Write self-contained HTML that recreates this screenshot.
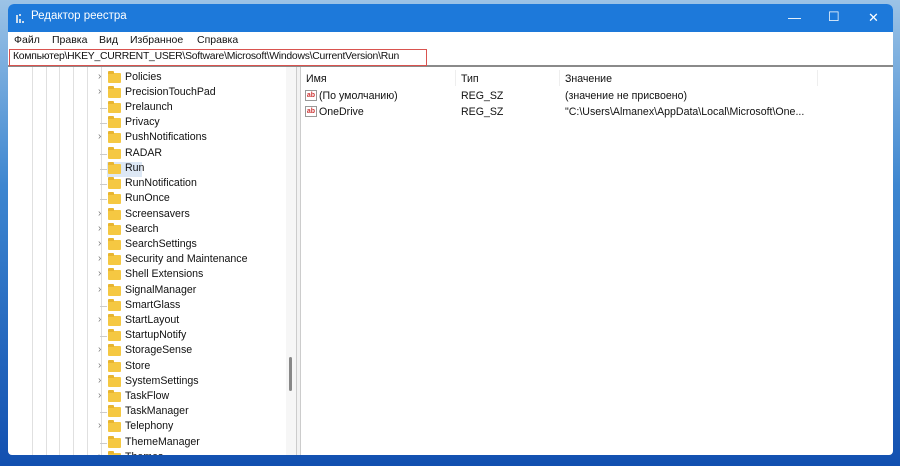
<!DOCTYPE html>
<html><head><meta charset="utf-8"><style>
*{margin:0;padding:0;box-sizing:border-box}
body{width:900px;height:466px;overflow:hidden;background:linear-gradient(180deg,#9cc3e6 0%,#3d86d0 40%,#1250b0 100%);font-family:"Segoe UI","Liberation Sans",sans-serif;position:relative}
.win{position:absolute;left:8px;top:4px;width:885px;height:451px;background:#fff;border-radius:6px 6px 4px 4px;overflow:hidden}
.title{height:28px;background:#1d79da;color:#fff;font-size:11.5px;position:relative}
.title .t{position:absolute;left:23px;top:6px}
.title .ic{position:absolute;left:8px;top:9px;width:10px;height:10px}
.ctl{position:absolute;top:6px;font-size:13px;color:#fff}
.menu{height:16px;font-size:10.5px;color:#111;padding-left:6px;position:relative}
.menu span{position:absolute;top:0}
.addr{position:absolute;left:1px;top:45px;width:418px;height:17px;border:1.5px solid #d9534f;font-size:10.4px;letter-spacing:-0.25px;line-height:14px;padding-left:3px;color:#111;white-space:nowrap;overflow:hidden}
.abar{position:absolute;left:0;top:44px;width:885px;height:19px;border-bottom:2px solid #8a8a8a}
.tree{position:absolute;left:0;top:63px;width:288px;height:388px;overflow:hidden}
.vl{position:absolute;top:0;bottom:0;width:1px;background:#e0e0e0}
.row{position:absolute;left:90px;height:15px;font-size:10.6px;color:#111;white-space:nowrap}
.row .ch{position:absolute;left:0;top:0;color:#777;font-size:10px}
.row .f{position:absolute;left:10px;top:2px;width:13px;height:10px;background:#f5c842;border-radius:1px}
.row .f:before{content:"";position:absolute;left:0;top:-2px;width:6px;height:3px;background:#e8b530;border-radius:1px 1px 0 0}
.row .n{position:absolute;left:27px;top:0}
.row .d{position:absolute;left:2px;top:7px;width:7px;height:1px;background:#ccc}
.sb{position:absolute;left:278px;top:0;width:10px;height:388px;background:#f6f6f6}
.thumb{position:absolute;left:3px;top:290px;width:3px;height:34px;background:#888;border-radius:2px}
.split{position:absolute;left:288px;top:63px;width:5px;height:388px;border-left:1px solid #ccc;border-right:1px solid #ccc;background:#f2f2f2}
.right{position:absolute;left:293px;top:63px;right:0;bottom:0;font-size:10.6px;color:#111}
.hd{position:absolute;top:6px}
.sep{position:absolute;top:3px;height:16px;width:1px;background:#eee}
.ab{position:absolute;width:12px;height:11px;border:1px solid #999;font-size:7px;color:#c33;font-weight:bold;line-height:9px;text-align:center;background:#fff}
</style></head><body>
<div class="win">
<div class="title">
<svg class="ic" viewBox="0 0 10 10"><rect x="0" y="2" width="2" height="8" fill="#cde"/><rect x="3" y="6" width="2" height="4" fill="#cde"/><rect x="6" y="8" width="2" height="2" fill="#cde"/><rect x="3" y="1" width="2" height="2" fill="#cde"/></svg>
<span class="t">Редактор реестра</span>
<span class="ctl" style="left:780px">—</span>
<span class="ctl" style="left:820px;top:5px">☐</span>
<span class="ctl" style="left:860px">✕</span>
</div>
<div class="menu" style="line-height:16px"><span style="left:6px">Файл</span><span style="left:44px">Правка</span><span style="left:91px">Вид</span><span style="left:122px">Избранное</span><span style="left:189px">Справка</span></div>
<div class="abar"></div>
<div class="addr">Компьютер\HKEY_CURRENT_USER\Software\Microsoft\Windows\CurrentVersion\Run</div>
<div class="tree">
<div class="vl" style="left:24px"></div><div class="vl" style="left:38px"></div><div class="vl" style="left:51px"></div><div class="vl" style="left:65px"></div><div class="vl" style="left:79px"></div>
<div class="vl" style="left:93px;background:#ddd"></div>
<div class="row" style="top:4px"><span class="ch">›</span><i class="f"></i><span class="n">Policies</span></div>
<div class="row" style="top:19px"><span class="ch">›</span><i class="f"></i><span class="n">PrecisionTouchPad</span></div>
<div class="row" style="top:34px"><i class="d"></i><i class="f"></i><span class="n">Prelaunch</span></div>
<div class="row" style="top:49px"><i class="d"></i><i class="f"></i><span class="n">Privacy</span></div>
<div class="row" style="top:64px"><span class="ch">›</span><i class="f"></i><span class="n">PushNotifications</span></div>
<div class="row" style="top:80px"><i class="d"></i><i class="f"></i><span class="n">RADAR</span></div>
<div class="row" style="top:95px"><i class="d"></i><span style="position:absolute;left:9px;top:0;width:35px;height:15px;background:#dde8f5"></span><i class="f"></i><span class="n">Run</span></div>
<div class="row" style="top:110px"><i class="d"></i><i class="f"></i><span class="n">RunNotification</span></div>
<div class="row" style="top:125px"><i class="d"></i><i class="f"></i><span class="n">RunOnce</span></div>
<div class="row" style="top:141px"><span class="ch">›</span><i class="f"></i><span class="n">Screensavers</span></div>
<div class="row" style="top:156px"><span class="ch">›</span><i class="f"></i><span class="n">Search</span></div>
<div class="row" style="top:171px"><span class="ch">›</span><i class="f"></i><span class="n">SearchSettings</span></div>
<div class="row" style="top:186px"><span class="ch">›</span><i class="f"></i><span class="n">Security and Maintenance</span></div>
<div class="row" style="top:201px"><span class="ch">›</span><i class="f"></i><span class="n">Shell Extensions</span></div>
<div class="row" style="top:217px"><span class="ch">›</span><i class="f"></i><span class="n">SignalManager</span></div>
<div class="row" style="top:232px"><i class="d"></i><i class="f"></i><span class="n">SmartGlass</span></div>
<div class="row" style="top:247px"><span class="ch">›</span><i class="f"></i><span class="n">StartLayout</span></div>
<div class="row" style="top:262px"><i class="d"></i><i class="f"></i><span class="n">StartupNotify</span></div>
<div class="row" style="top:277px"><span class="ch">›</span><i class="f"></i><span class="n">StorageSense</span></div>
<div class="row" style="top:293px"><span class="ch">›</span><i class="f"></i><span class="n">Store</span></div>
<div class="row" style="top:308px"><span class="ch">›</span><i class="f"></i><span class="n">SystemSettings</span></div>
<div class="row" style="top:323px"><span class="ch">›</span><i class="f"></i><span class="n">TaskFlow</span></div>
<div class="row" style="top:338px"><i class="d"></i><i class="f"></i><span class="n">TaskManager</span></div>
<div class="row" style="top:353px"><span class="ch">›</span><i class="f"></i><span class="n">Telephony</span></div>
<div class="row" style="top:369px"><i class="d"></i><i class="f"></i><span class="n">ThemeManager</span></div>
<div class="row" style="top:384px"><span class="ch">›</span><i class="f"></i><span class="n">Themes</span></div>
<div class="sb"><div class="thumb"></div></div>
</div>
<div class="split"></div>
<div class="right">
<span class="hd" style="left:5px">Имя</span><span class="hd" style="left:160px">Тип</span><span class="hd" style="left:264px">Значение</span>
<div class="sep" style="left:154px"></div><div class="sep" style="left:258px"></div><div class="sep" style="left:516px"></div>
<div class="ab" style="left:4px;top:23px">ab</div><span style="position:absolute;left:18px;top:23px">(По умолчанию)</span>
<span style="position:absolute;left:160px;top:23px">REG_SZ</span><span style="position:absolute;left:264px;top:23px">(значение не присвоено)</span>
<div class="ab" style="left:4px;top:39px">ab</div><span style="position:absolute;left:18px;top:39px">OneDrive</span>
<span style="position:absolute;left:160px;top:39px">REG_SZ</span><span style="position:absolute;left:264px;top:39px">"C:\Users\Almanex\AppData\Local\Microsoft\One...</span>
</div>
</div>
</body></html>
